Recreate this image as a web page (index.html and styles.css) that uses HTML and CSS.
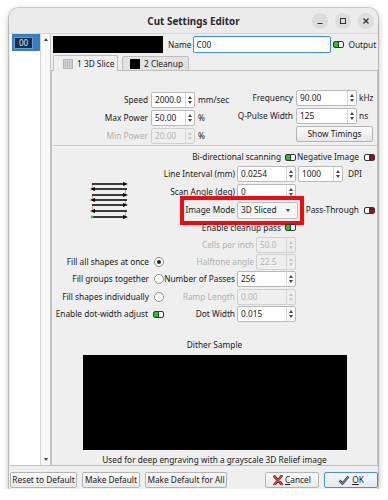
FILE: index.html
```html
<!DOCTYPE html>
<html lang="en">
<head>
    <meta charset="UTF-8">
    <meta name="viewport" content="width=device-width, initial-scale=1.0">
    <title>Cut Settings Editor</title>
    <link rel="stylesheet" href="styles.css">
</head>
<body>
    <div class="window">
        <div class="titlebar">
            <span></span>
            <span class="title">Cut Settings Editor</span>
            <div class="win-btns">
                <span class="win-btn"><svg width="8" height="8" viewBox="0 0 8 8"><path d="M1.5 6.5h5" stroke="#333" stroke-width="1.2"/></svg></span>
                <span class="win-btn"><svg width="8" height="8" viewBox="0 0 8 8"><rect x="1.5" y="1.5" width="5" height="5" fill="none" stroke="#333" stroke-width="1"/></svg></span>
                <span class="win-btn"><svg width="8" height="8" viewBox="0 0 8 8"><path d="M1.5 1.5l5 5M6.5 1.5l-5 5" stroke="#333" stroke-width="1.2"/></svg></span>
            </div>
        </div>

        <div class="content">
            <div class="sidebar">
                <div class="list">
                    <div class="item"><span>00</span></div>
                </div>
                <div class="scrollbar">
                    <i class="sb-up"></i>
                    <i class="sb-down"></i>
                </div>
            </div>

            <div class="main">
                <div class="name-row">
                    <div class="swatch"></div>
                    <span class="name-label">Name</span>
                    <div class="name-input">C00</div>
                    <i class="tog on"></i>
                    <span class="output-label">Output</span>
                </div>

                <div class="tabs">
                    <div class="tab active">
                        <svg width="10" height="10" viewBox="0 0 10 10"><rect x="0.5" y="0.5" width="9" height="9" fill="#cfcfcf" stroke="#8a8a8a" stroke-dasharray="1 1"/><path d="M2 3h6M2 5h6M2 7h6" stroke="#a9a9a9" stroke-dasharray="1 1"/></svg>
                        <span>1 3D Slice</span>
                    </div>
                    <div class="tab">
                        <svg width="10" height="10" viewBox="0 0 10 10"><rect x="0" y="0" width="10" height="10" fill="#000"/></svg>
                        <span>2 Cleanup</span>
                    </div>
                </div>

                <div class="pane">
                    <div class="timing">
                        <div class="tcol-left">
                            <span class="lbl">Speed</span>
                            <div class="spin"><span class="val">2000.0</span><span class="arrows"><i class="up"></i><i class="dn"></i></span></div>
                            <span>mm/sec</span>

                            <span class="lbl">Max Power</span>
                            <div class="spin"><span class="val">50.00</span><span class="arrows"><i class="up"></i><i class="dn"></i></span></div>
                            <span>%</span>

                            <span class="lbl off-text">Min Power</span>
                            <div class="spin off"><span class="val">20.00</span><span class="arrows"><i class="up"></i><i class="dn"></i></span></div>
                            <span>%</span>
                        </div>
                        <div class="tcol-right">
                            <span class="lbl">Frequency</span>
                            <div class="spin"><span class="val">90.00</span><span class="arrows"><i class="up"></i><i class="dn"></i></span></div>
                            <span class="unit">kHz</span>

                            <span class="lbl">Q-Pulse Width</span>
                            <div class="spin"><span class="val">125</span><span class="arrows"><i class="up"></i><i class="dn"></i></span></div>
                            <span class="unit">ns</span>

                            <div class="btn timings-btn">Show Timings</div>
                        </div>
                    </div>

                    <div class="sep"></div>

                    <div class="scan">
                        <div class="cell c1-4 end gap4">Bi-directional scanning <i class="tog on"></i></div>
                        <div class="cell c5 end gap5 pr2">Negative Image <i class="tog off"></i></div>

                        <div class="cell c1-3 end pr1">Line Interval (mm)</div>
                        <div class="cell c4"><div class="spin in-c4"><span class="val">0.0254</span><span class="arrows"><i class="up"></i><i class="dn"></i></span></div></div>
                        <div class="cell c5 gap5"><div class="spin dpi"><span class="val">1000</span><span class="arrows"><i class="up"></i><i class="dn"></i></span></div>DPI</div>

                        <div class="scan-icon">
                            <svg width="40" height="37" viewBox="0 0 40 37">
                                <g stroke="#f09a9a" stroke-width="1">
                                    <path d="M3.5 2v5M36.5 7v6M3.5 13v5M36.5 18v5M3.5 23v6M36.5 29v6"/>
                                </g>
                                <g stroke="#000" stroke-width="1.6">
                                    <path d="M3 2h32M5 7h33M3 13h32M5 18h33M3 23h32M5 29h33M3 35h32"/>
                                </g>
                                <g fill="#000">
                                    <path d="M34 0l5 2-5 2z M6 5l-5 2 5 2z M34 11l5 2-5 2z M6 16l-5 2 5 2z M34 21l5 2-5 2z M6 27l-5 2 5 2z M34 33l5 2-5 2z"/>
                                </g>
                                <circle cx="3" cy="35" r="1.4" fill="#2ecc40"/>
                            </svg>
                        </div>
                        <div class="cell c3 end pr1">Scan Angle (deg)</div>
                        <div class="cell c4"><div class="spin in-c4"><span class="val">0</span><span class="arrows"><i class="up"></i><i class="dn"></i></span></div></div>

                        <div class="cell c3-4 hl-cell">
                            <div class="hl">
                                <span>Image Mode</span>
                                <div class="combo"><span>3D Sliced</span><i class="caret"></i></div>
                            </div>
                        </div>
                        <div class="cell c5 end gap5 pr2">Pass-Through <i class="tog off"></i></div>

                        <div class="cell c1-4 end gap4">Enable cleanup pass <i class="tog on"></i></div>

                        <div class="cell c1-4 end gap2 off-text">Cells per inch <div class="spin off short"><span class="val">50.0</span><span class="arrows"><i class="up"></i><i class="dn"></i></span></div></div>

                        <div class="cell c1 end pr2">Fill all shapes at once</div>
                        <div class="cell c2"><i class="radio on"></i></div>
                        <div class="cell c3-4 end gap2 off-text">Halftone angle <div class="spin off short"><span class="val">22.5</span><span class="arrows"><i class="up"></i><i class="dn"></i></span></div></div>

                        <div class="cell c1 end pr2">Fill groups together</div>
                        <div class="cell c2"><i class="radio"></i></div>
                        <div class="cell c3 end pr1">Number of Passes</div>
                        <div class="cell c4"><div class="spin in-c4"><span class="val">256</span><span class="arrows"><i class="up"></i><i class="dn"></i></span></div></div>

                        <div class="cell c1 end pr2">Fill shapes individually</div>
                        <div class="cell c2"><i class="radio"></i></div>
                        <div class="cell c3 end pr1 off-text">Ramp Length</div>
                        <div class="cell c4"><div class="spin off in-c4"><span class="val">0.00</span><span class="arrows"><i class="up"></i><i class="dn"></i></span></div></div>

                        <div class="cell c1 end pr3">Enable dot-width adjust</div>
                        <div class="cell c2"><i class="tog on"></i></div>
                        <div class="cell c3 end pr1">Dot Width</div>
                        <div class="cell c4"><div class="spin in-c4"><span class="val">0.015</span><span class="arrows"><i class="up"></i><i class="dn"></i></span></div></div>
                    </div>

                    <div class="dither-label">Dither Sample</div>
                    <div class="dither-box"></div>
                    <div class="dither-note">Used for deep engraving with a grayscale 3D Relief image</div>
                </div>
            </div>
        </div>

        <div class="footer">
            <div class="btn w-reset">Reset to Default</div>
            <div class="btn w-make">Make Default</div>
            <div class="btn w-all">Make Default for All</div>
            <div class="spacer"></div>
            <div class="btn w-cancel">
                <svg width="10" height="10" viewBox="0 0 10 10"><path d="M1.5 1.5l7 7.5M8.5 1l-7 8.5" stroke="#5a1a1a" stroke-width="2.6" stroke-linecap="round"/><path d="M1.5 1.5l7 7.5M8.5 1l-7 8.5" stroke="#e04a3a" stroke-width="1.4" stroke-linecap="round"/></svg>
                <span><u>C</u>ancel</span>
            </div>
            <div class="btn w-ok default">
                <svg width="12" height="10" viewBox="0 0 12 10"><path d="M1.5 5.5l3 3 6-7" fill="none" stroke="#4a4a4a" stroke-width="2.6" stroke-linejoin="round"/><path d="M1.5 5.5l3 3 6-7" fill="none" stroke="#9a9a9a" stroke-width="1" stroke-linejoin="round"/></svg>
                <span><u>O</u>K</span>
            </div>
        </div>
    </div>
</body>
</html>
```

FILE: styles.css
```css
* {
    margin: 0;
    padding: 0;
    box-sizing: border-box;
}

body {
    background: #fff;
    font-family: 'Noto Sans', 'Open Sans', sans-serif;
    font-size: 8.3px;
    color: #1a1a1a;
    line-height: 12px;
}

.window {
    margin: 8px 0 0 9px;
    width: 369px;
    height: 481px;
    background: #efefef;
    border-radius: 10px 10px 2px 2px;
    box-shadow: 0 0 0 1px rgba(0, 0, 0, 0.16), 0 2px 7px rgba(0, 0, 0, 0.3);
    display: flex;
    flex-direction: column;
    overflow: hidden;
}

/* title bar */
.titlebar {
    height: 26px;
    display: grid;
    grid-template-columns: 1fr auto 1fr;
    align-items: center;
    background: #ececec;
    border-bottom: 1px solid #d6d6d6;
}

.title {
    font-weight: bold;
    font-size: 9.9px;
    color: #2a2a2a;
}

.win-btns {
    justify-self: end;
    display: flex;
    gap: 7px;
    margin-right: 4px;
}

.win-btn {
    width: 16px;
    height: 16px;
    border-radius: 50%;
    background: #dcdcdc;
    display: flex;
    align-items: center;
    justify-content: center;
}

/* body */
.content {
    flex: 1;
    display: flex;
    padding-left: 1px;
}

.sidebar {
    width: 41px;
    display: flex;
    border-right: 1px solid #c4c4c4;
    border-bottom: 1px solid #c4c4c4;
}

.list {
    width: 30px;
    background: #fff;
}

.item {
    height: 17px;
    margin-left: 2px;
    background: #3b7dc4;
    display: flex;
    align-items: center;
    padding-left: 2px;
}

.item span {
    width: 19px;
    height: 12px;
    background: #15304f;
    border: 1px solid #6c9bd2;
    color: #d8e8ff;
    text-align: center;
    line-height: 10px;
    font-size: 8px;
}

.scrollbar {
    width: 10px;
    border-left: 1px solid #d4d4d4;
    background: #f8f8f8;
    display: flex;
    flex-direction: column;
    justify-content: space-between;
    align-items: center;
    padding: 4px 0 4px;
}

.sb-up {
    border-left: 2.5px solid transparent;
    border-right: 2.5px solid transparent;
    border-bottom: 3px solid #444;
}

.sb-down {
    border-left: 2.5px solid transparent;
    border-right: 2.5px solid transparent;
    border-top: 3px solid #444;
}

.main {
    flex: 1;
    display: flex;
    flex-direction: column;
}

.name-row {
    display: flex;
    align-items: center;
    height: 17px;
    margin: 2px 0 0 2px;
}

.swatch {
    width: 110px;
    height: 17px;
    background: #000;
}

.name-label {
    margin-left: 5px;
}

.name-input {
    margin: 0 2px;
    width: 138px;
    height: 17px;
    border: 1px solid #3d8ee0;
    border-radius: 2px;
    background: #fff;
    padding-left: 2px;
    line-height: 15px;
}

.output-label {
    margin-left: 4px;
}

/* tabs */
.tabs {
    display: flex;
    align-items: flex-end;
    gap: 4px;
    height: 16px;
    margin: 2px 0 -1px 2px;
    position: relative;
    z-index: 1;
}

.tab {
    display: flex;
    align-items: center;
    gap: 4px;
    width: 67px;
    height: 15px;
    padding-left: 7px;
    background: #e3e3e3;
    border: 1px solid #bdbdbd;
    border-radius: 2px 2px 0 0;
}

.tab.active {
    width: 65px;
    height: 16px;
    padding-left: 9px;
    background: #efefef;
    border-bottom: none;
}

.pane {
    flex: 1;
    border: 1px solid #bdbdbd;
}

/* speed / power block */
.timing {
    display: flex;
    padding-top: 19px;
}

.tcol-left {
    width: 180px;
    margin-top: 2px;
    display: grid;
    grid-template-columns: 96px 44px auto;
    grid-auto-rows: 16px;
    column-gap: 3px;
    row-gap: 2px;
    align-items: center;
}

.tcol-right {
    display: grid;
    grid-template-columns: 61px 61px auto;
    grid-auto-rows: 16px;
    column-gap: 3px;
    row-gap: 2px;
    align-items: center;
}

.lbl {
    text-align: right;
    white-space: nowrap;
}

.unit {
    margin-left: -1px;
}

.timings-btn {
    grid-column: 2 / 4;
    width: 77px;
    height: 17px;
    justify-content: center;
}

.sep {
    height: 2px;
    margin: 1px 0 0 1px;
    border-top: 1px solid #c6c6c6;
    border-bottom: 1px solid #fafafa;
}

/* spin boxes */
.spin {
    display: flex;
    height: 16px;
    border: 1px solid #b9b9b9;
    border-radius: 2px;
    background: #fff;
}

.spin .val {
    flex: 1;
    padding-left: 3px;
    line-height: 14px;
}

.spin .arrows {
    width: 9px;
    border-left: 1px solid #d6d6d6;
    display: flex;
    flex-direction: column;
    justify-content: center;
    align-items: center;
    gap: 2px;
}

.up {
    border-left: 2.5px solid transparent;
    border-right: 2.5px solid transparent;
    border-bottom: 3px solid #444;
}

.dn {
    border-left: 2.5px solid transparent;
    border-right: 2.5px solid transparent;
    border-top: 3px solid #444;
}

.spin.off {
    background: #efefef;
    border-color: #d0d0d0;
    color: #b4b4b4;
}

.spin.off .up {
    border-bottom-color: #c4c4c4;
}

.spin.off .dn {
    border-top-color: #c4c4c4;
}

.spin.in-c4 {
    width: 59px;
    margin-left: 1px;
}

.spin.dpi {
    width: 45px;
    margin-left: 1px;
}

.spin.short {
    width: 40px;
    margin-right: 1px;
}

.off-text {
    color: #afafaf;
}

/* scan grid */
.scan {
    margin-top: 2px;
    display: grid;
    grid-template-columns: 99px 15px 70px 61px 1fr;
    grid-template-rows: 16px 17px 19px 18px 17px 17px 17px 18px 17px 18px;
}

.cell {
    display: flex;
    align-items: center;
    white-space: nowrap;
}

.c1 { grid-column: 1; }
.c2 { grid-column: 2; justify-content: center; }
.c3 { grid-column: 3; }
.c4 { grid-column: 4; }
.c5 { grid-column: 5; }
.c1-3 { grid-column: 1 / 4; }
.c1-4 { grid-column: 1 / 5; }
.c3-4 { grid-column: 3 / 5; }

.end { justify-content: flex-end; }
.gap2 { gap: 2px; }
.gap4 { gap: 4px; }
.gap5 { gap: 5px; }
.pr1 { padding-right: 1px; }
.pr2 { padding-right: 2px; }
.pr3 { padding-right: 3px; }
.c1-4.gap4 { padding-right: 1px; }

.scan-icon {
    grid-column: 1;
    grid-row: 3 / span 2;
    justify-self: end;
    margin-right: 22px;
    display: flex;
    align-items: center;
}

.hl-cell {
    justify-content: flex-end;
}

.hl {
    display: flex;
    align-items: center;
    gap: 2px;
    margin-right: -1px;
    outline: 4px solid #ec0d12;
    outline-offset: 2px;
}

.combo {
    width: 61px;
    height: 17px;
    border: 1px solid #bcbcbc;
    border-radius: 2px;
    background: #f6f6f6;
    display: flex;
    align-items: center;
    justify-content: space-between;
    padding: 0 7px 0 3px;
}

.caret {
    border-left: 2.5px solid transparent;
    border-right: 2.5px solid transparent;
    border-top: 3px solid #444;
}

/* small controls */
.tog {
    display: inline-block;
    flex: none;
    width: 11px;
    height: 7px;
    border: 1px solid #333;
    border-radius: 2px;
}

.tog.on {
    background: linear-gradient(to right, #25c425 0 4px, #333 4px 5px, #fff 5px);
}

.tog.off {
    background: linear-gradient(to right, #fff 0 4px, #333 4px 5px, #8e1414 5px);
}

.radio {
    width: 10px;
    height: 10px;
    border-radius: 50%;
    border: 1px solid #8c8c8c;
    background: #fff;
    display: flex;
    align-items: center;
    justify-content: center;
}

.radio.on::after {
    content: "";
    width: 4px;
    height: 4px;
    border-radius: 50%;
    background: #222;
}

/* dither sample */
.dither-label {
    margin-top: 16px;
    text-align: center;
}

.dither-box {
    width: 264px;
    height: 95px;
    margin: 4px auto 0;
    background: #000;
}

.dither-note {
    margin-top: 5px;
    line-height: 10px;
    text-align: center;
}

/* buttons */
.btn {
    height: 16px;
    display: flex;
    align-items: center;
    justify-content: center;
    gap: 2px;
    border: 1px solid #b4b4b4;
    border-radius: 2px;
    background: linear-gradient(#fbfbfb, #e8e8e8);
    white-space: nowrap;
}

.footer {
    height: 23px;
    display: flex;
    gap: 5px;
    padding: 6px 0 0 1px;
}

.spacer {
    flex: 1;
}

.w-reset { width: 67px; }
.w-make { width: 58px; }
.w-all { width: 82px; }
.w-cancel { width: 54px; }
.w-ok { width: 54px; }

.btn.default {
    border-color: #4f8fd6;
    background: linear-gradient(#f4f8fc, #e2eaf3);
}
```
